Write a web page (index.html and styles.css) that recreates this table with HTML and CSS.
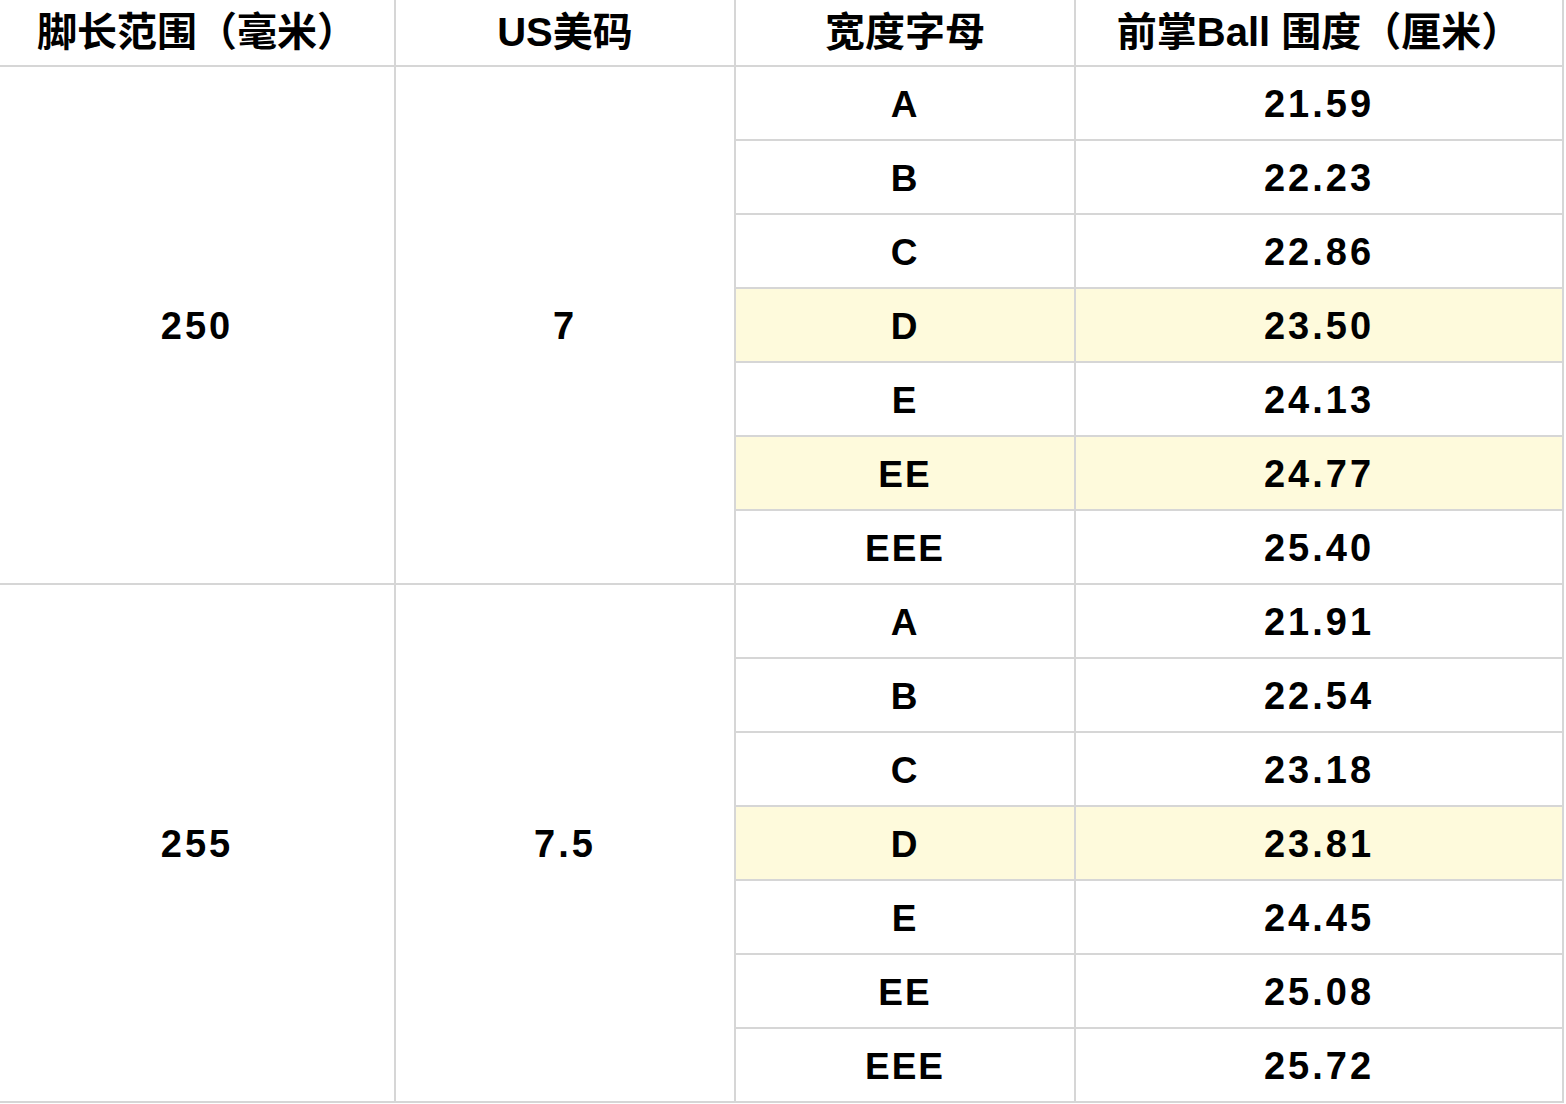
FILE: index.html
```html
<!DOCTYPE html>
<html lang="zh-CN">
<head>
<meta charset="utf-8">
<title>鞋码宽度对照表</title>
<link rel="stylesheet" href="styles.css">
</head>
<body>
<div class="sheet">
  <div class="cell head">脚长范围（毫米）</div>
  <div class="cell head">US美码</div>
  <div class="cell head">宽度字母</div>
  <div class="cell head">前掌Ball 围度（厘米）</div>

  <div class="cell num span g1">250</div>
  <div class="cell num span g1">7</div>
  <div class="cell">A</div><div class="cell num">21.59</div>
  <div class="cell">B</div><div class="cell num">22.23</div>
  <div class="cell">C</div><div class="cell num">22.86</div>
  <div class="cell hl">D</div><div class="cell num hl">23.50</div>
  <div class="cell">E</div><div class="cell num">24.13</div>
  <div class="cell hl">EE</div><div class="cell num hl">24.77</div>
  <div class="cell">EEE</div><div class="cell num">25.40</div>

  <div class="cell num span g2">255</div>
  <div class="cell num span g2">7.5</div>
  <div class="cell">A</div><div class="cell num">21.91</div>
  <div class="cell">B</div><div class="cell num">22.54</div>
  <div class="cell">C</div><div class="cell num">23.18</div>
  <div class="cell hl">D</div><div class="cell num hl">23.81</div>
  <div class="cell">E</div><div class="cell num">24.45</div>
  <div class="cell">EE</div><div class="cell num">25.08</div>
  <div class="cell">EEE</div><div class="cell num">25.72</div>
</div>
</body>
</html>
```

FILE: styles.css
```css
html, body {
  margin: 0;
  padding: 0;
  background: #ffffff;
}

.sheet {
  display: grid;
  grid-template-columns: 394px 338px 338px 486px;
  grid-template-rows: 65px repeat(14, 72px);
  gap: 2px;
  padding: 0 2px 2px 0;
  width: max-content;
  background: #d6d6d6;
  font-family: "Liberation Sans", "Noto Sans CJK SC", sans-serif;
  font-weight: 700;
  color: #000000;
}

.cell {
  background: #ffffff;
  display: flex;
  align-items: center;
  justify-content: center;
  font-size: 37px;
  letter-spacing: 2px;
  padding-top: 3px;
}

.num {
  font-size: 38px;
  letter-spacing: 3px;
  padding-top: 2px;
}

.head {
  font-size: 40px;
  letter-spacing: 0;
  padding-top: 0;
  padding-bottom: 7px;
}

.span.g1 {
  grid-row: 2 / span 7;
}

.span.g2 {
  grid-row: 9 / span 7;
}

.hl {
  background: #fefadc;
}
```
